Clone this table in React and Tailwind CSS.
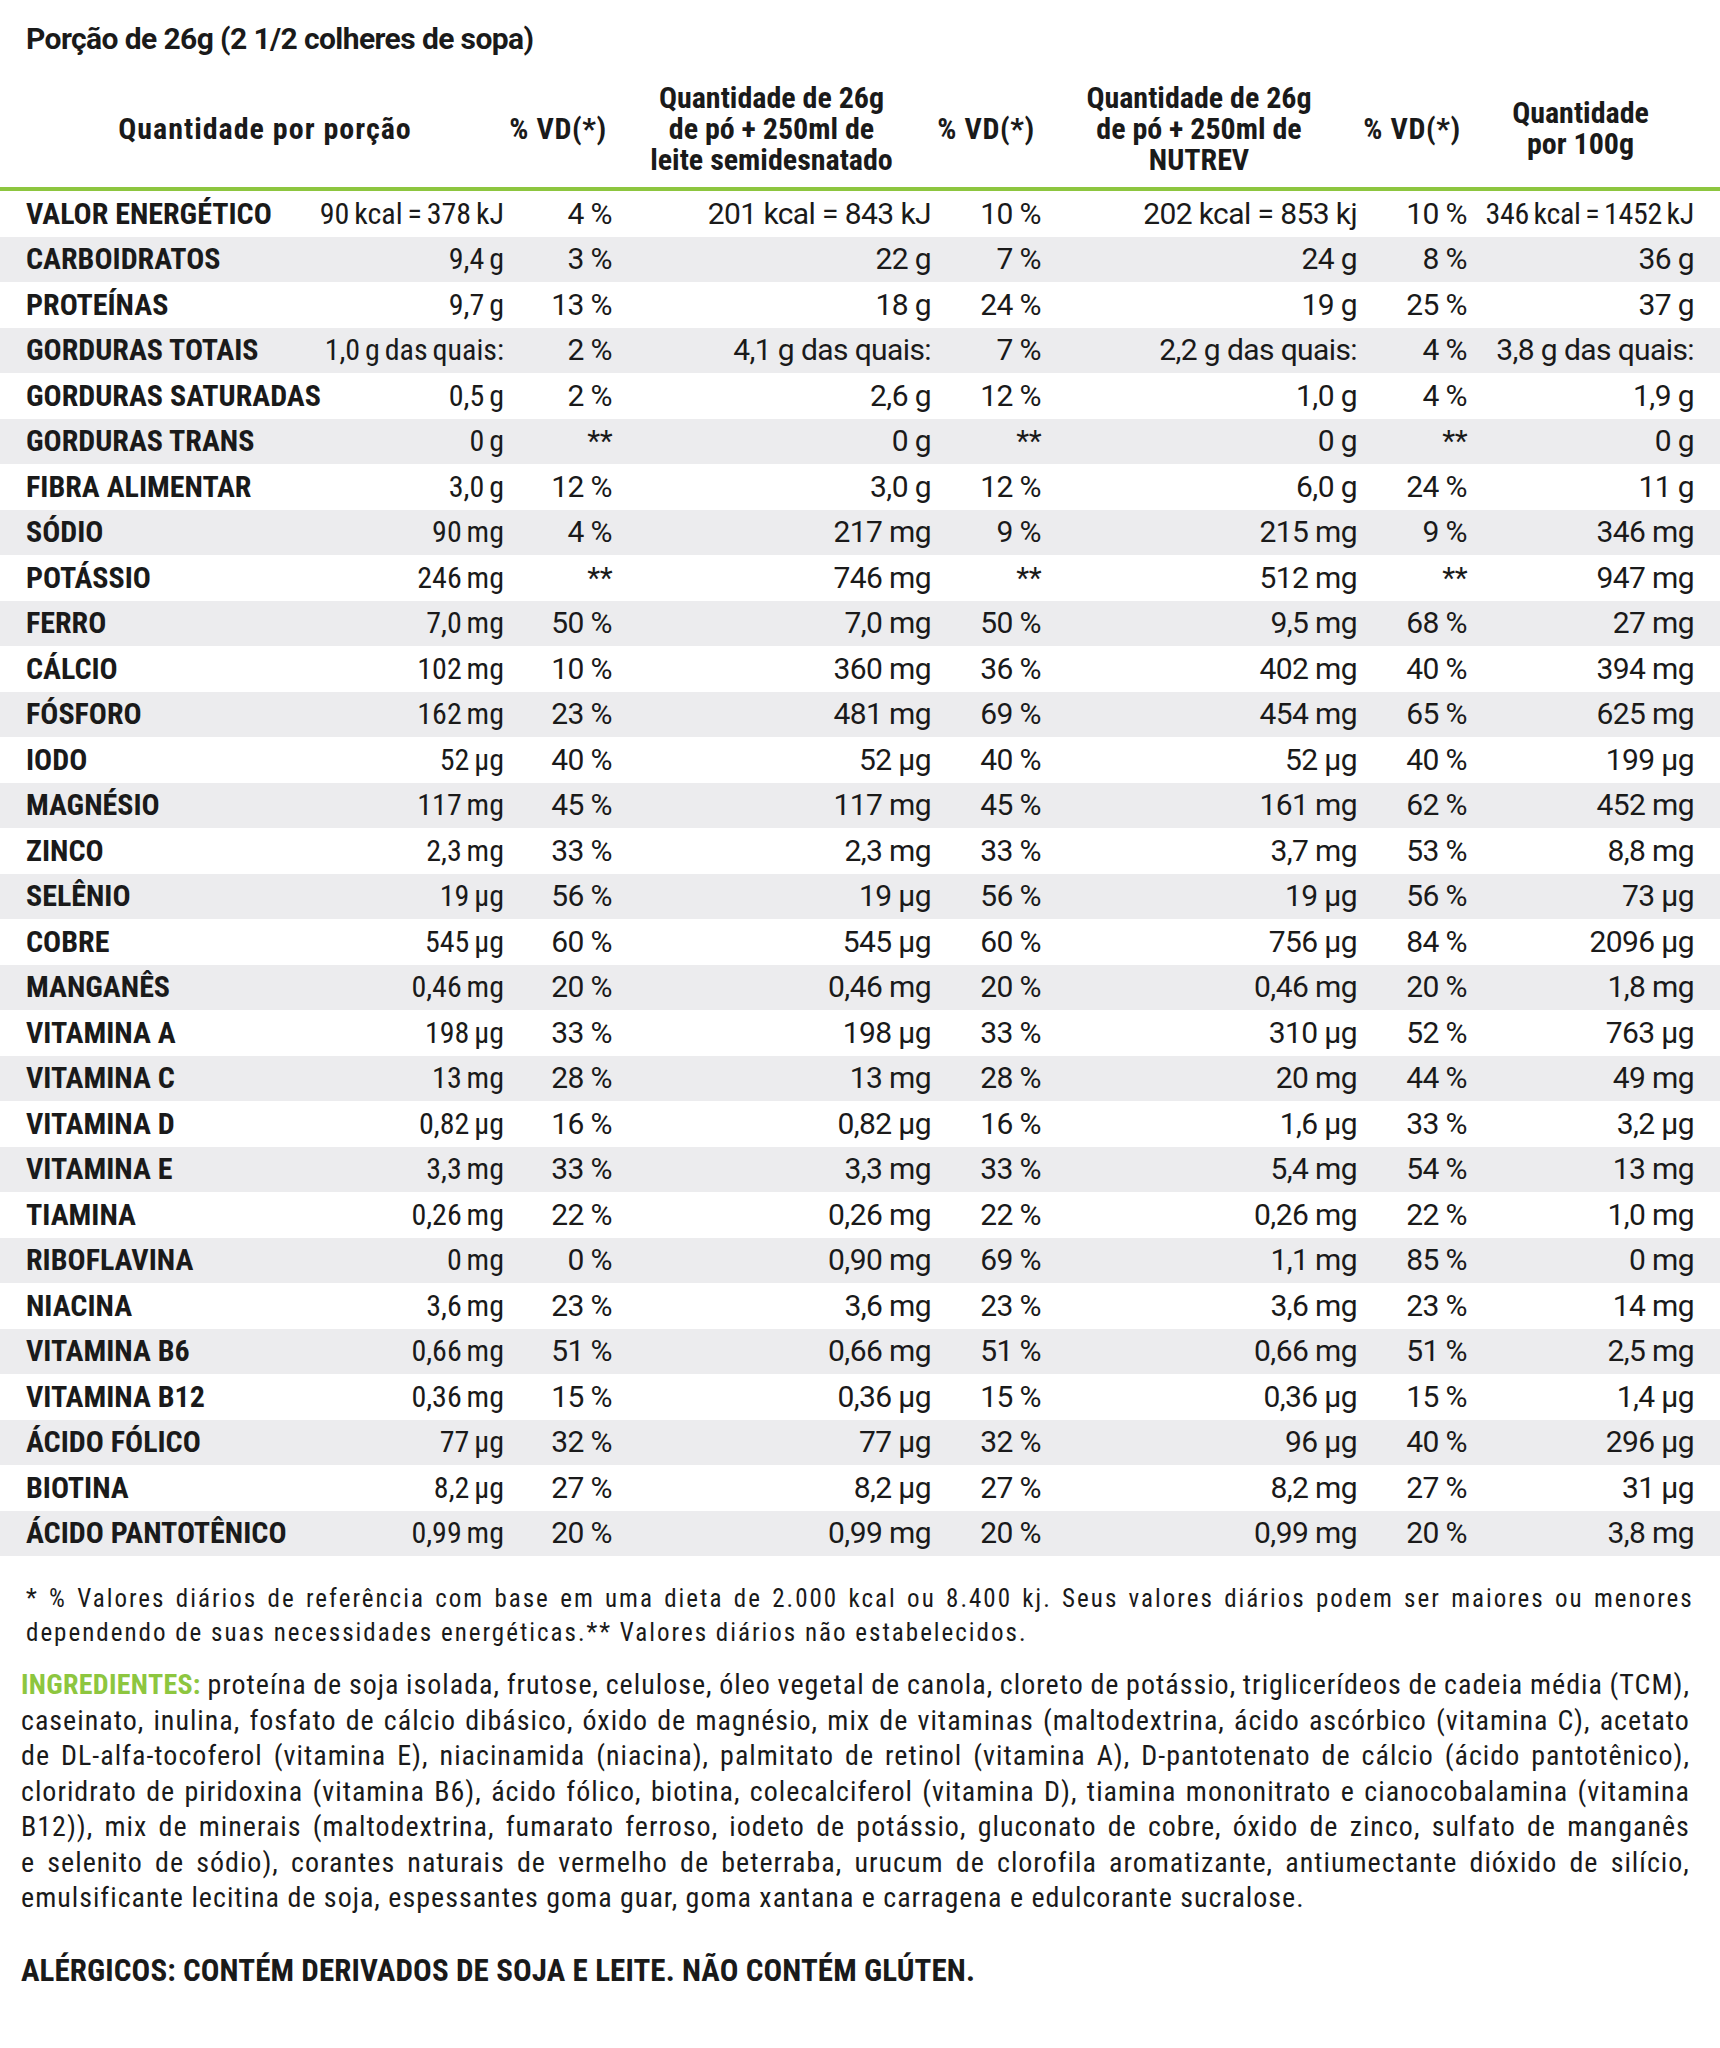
import React from "react";

const rows = [
  ["VALOR ENERGÉTICO", "90 kcal = 378 kJ", "4 %", "201 kcal = 843 kJ", "10 %", "202 kcal = 853 kj", "10 %", "346 kcal = 1452 kJ"],
  ["CARBOIDRATOS", "9,4 g", "3 %", "22 g", "7 %", "24 g", "8 %", "36 g"],
  ["PROTEÍNAS", "9,7 g", "13 %", "18 g", "24 %", "19 g", "25 %", "37 g"],
  ["GORDURAS TOTAIS", "1,0 g das quais:", "2 %", "4,1 g das quais:", "7 %", "2,2 g das quais:", "4 %", "3,8 g das quais:"],
  ["GORDURAS SATURADAS", "0,5 g", "2 %", "2,6 g", "12 %", "1,0 g", "4 %", "1,9 g"],
  ["GORDURAS TRANS", "0 g", "**", "0 g", "**", "0 g", "**", "0 g"],
  ["FIBRA ALIMENTAR", "3,0 g", "12 %", "3,0 g", "12 %", "6,0 g", "24 %", "11 g"],
  ["SÓDIO", "90 mg", "4 %", "217 mg", "9 %", "215 mg", "9 %", "346 mg"],
  ["POTÁSSIO", "246 mg", "**", "746 mg", "**", "512 mg", "**", "947 mg"],
  ["FERRO", "7,0 mg", "50 %", "7,0 mg", "50 %", "9,5 mg", "68 %", "27 mg"],
  ["CÁLCIO", "102 mg", "10 %", "360 mg", "36 %", "402 mg", "40 %", "394 mg"],
  ["FÓSFORO", "162 mg", "23 %", "481 mg", "69 %", "454 mg", "65 %", "625 mg"],
  ["IODO", "52 µg", "40 %", "52 µg", "40 %", "52 µg", "40 %", "199 µg"],
  ["MAGNÉSIO", "117 mg", "45 %", "117 mg", "45 %", "161 mg", "62 %", "452 mg"],
  ["ZINCO", "2,3 mg", "33 %", "2,3 mg", "33 %", "3,7 mg", "53 %", "8,8 mg"],
  ["SELÊNIO", "19 µg", "56 %", "19 µg", "56 %", "19 µg", "56 %", "73 µg"],
  ["COBRE", "545 µg", "60 %", "545 µg", "60 %", "756 µg", "84 %", "2096 µg"],
  ["MANGANÊS", "0,46 mg", "20 %", "0,46 mg", "20 %", "0,46 mg", "20 %", "1,8 mg"],
  ["VITAMINA A", "198 µg", "33 %", "198 µg", "33 %", "310 µg", "52 %", "763 µg"],
  ["VITAMINA C", "13 mg", "28 %", "13 mg", "28 %", "20 mg", "44 %", "49 mg"],
  ["VITAMINA D", "0,82 µg", "16 %", "0,82 µg", "16 %", "1,6 µg", "33 %", "3,2 µg"],
  ["VITAMINA E", "3,3 mg", "33 %", "3,3 mg", "33 %", "5,4 mg", "54 %", "13 mg"],
  ["TIAMINA", "0,26 mg", "22 %", "0,26 mg", "22 %", "0,26 mg", "22 %", "1,0 mg"],
  ["RIBOFLAVINA", "0 mg", "0 %", "0,90 mg", "69 %", "1,1 mg", "85 %", "0 mg"],
  ["NIACINA", "3,6 mg", "23 %", "3,6 mg", "23 %", "3,6 mg", "23 %", "14 mg"],
  ["VITAMINA B6", "0,66 mg", "51 %", "0,66 mg", "51 %", "0,66 mg", "51 %", "2,5 mg"],
  ["VITAMINA B12", "0,36 mg", "15 %", "0,36 µg", "15 %", "0,36 µg", "15 %", "1,4 µg"],
  ["ÁCIDO FÓLICO", "77 µg", "32 %", "77 µg", "32 %", "96 µg", "40 %", "296 µg"],
  ["BIOTINA", "8,2 µg", "27 %", "8,2 µg", "27 %", "8,2 mg", "27 %", "31 µg"],
  ["ÁCIDO PANTOTÊNICO", "0,99 mg", "20 %", "0,99 mg", "20 %", "0,99 mg", "20 %", "3,8 mg"],
];

const ingredientLines = [
  "proteína de soja isolada, frutose, celulose, óleo vegetal de canola, cloreto de potássio, triglicerídeos de cadeia média (TCM),",
  "caseinato, inulina, fosfato de cálcio dibásico, óxido de magnésio, mix de vitaminas (maltodextrina, ácido ascórbico (vitamina C), acetato",
  "de DL-alfa-tocoferol (vitamina E), niacinamida (niacina), palmitato de retinol (vitamina A), D-pantotenato de cálcio (ácido pantotênico),",
  "cloridrato de piridoxina (vitamina B6), ácido fólico, biotina, colecalciferol (vitamina D), tiamina mononitrato e cianocobalamina (vitamina",
  "B12)), mix de minerais (maltodextrina, fumarato ferroso, iodeto de potássio, gluconato de cobre, óxido de zinco, sulfato de manganês",
  "e selenito de sódio), corantes naturais de vermelho de beterraba, urucum de clorofila aromatizante, antiumectante dióxido de silício,",
];

const GRID = "grid grid-cols-[250px_228px_108px_319px_110px_316px_110px_227px]";

function valueClass(i, j) {
  if (j === 1) return "text-right [font-stretch:75%] [word-spacing:-2px]";
  if (j === 7 && i === 0) return "text-right [font-stretch:75%] tracking-[-0.3px] [word-spacing:-2px]";
  return "text-right [font-stretch:88%] tracking-[-0.6px]";
}

function JustifiedLine({ text, prefix }) {
  const words = text.split(" ");
  return (
    <div className="flex justify-between whitespace-nowrap">
      {prefix}
      {words.map((w, i) => (
        <span key={i}>{w}</span>
      ))}
    </div>
  );
}

export default function App() {
  return (
    <div className="w-[1720px] min-h-[2048px] bg-white text-[#1a1a1a] font-['Roboto',sans-serif]">
      {/* title */}
      <div className="pt-[19px] pl-[26px] h-[59px] text-[30px] leading-[40px] font-bold [font-stretch:88%] tracking-[-0.6px]">
        Porção de 26g (2 1/2 colheres de sopa)
      </div>

      {/* header */}
      <div className={`${GRID} pl-[26px] pt-[10px] h-[128px] items-center text-center font-bold text-[30px] leading-[31px] [font-stretch:75%] whitespace-nowrap`}>
        <div className="col-span-2 tracking-[1px]">Quantidade por porção</div>
        <div className="tracking-[0.6px]">% VD(*)</div>
        <div>Quantidade de 26g<br />de pó + 250ml de<br />leite semidesnatado</div>
        <div className="tracking-[0.6px]">% VD(*)</div>
        <div>Quantidade de 26g<br />de pó + 250ml de<br />NUTREV</div>
        <div className="tracking-[0.6px]">% VD(*)</div>
        <div>Quantidade<br />por 100g</div>
      </div>

      <div className="h-[4px] bg-[#8dc63f]" />

      {/* rows */}
      <div className="flex flex-col">
        {rows.map((r, i) => (
          <div
            key={r[0]}
            className={`${GRID} pl-[26px] h-[45.5px] items-center text-[30px] leading-[34px] whitespace-nowrap ${
              i % 2 === 1 ? "bg-[#ececee]" : "bg-white"
            }`}
          >
            <div className="font-bold [font-stretch:75%]">{r[0]}</div>
            {r.slice(1).map((c, k) => (
              <div key={k} className={valueClass(i, k + 1)}>
                {c}
              </div>
            ))}
          </div>
        ))}
      </div>

      {/* footnote */}
      <div className="mt-[26px] px-[26px] text-[25px] leading-[34px] tracking-[2px] [font-stretch:85%]">
        <JustifiedLine text="* % Valores diários de referência com base em uma dieta de 2.000 kcal ou 8.400 kj. Seus valores diários podem ser maiores ou menores" />
        <div>dependendo de suas necessidades energéticas.** Valores diários não estabelecidos.</div>
      </div>

      {/* ingredients */}
      <div className="mt-[17px] pl-[21px] pr-[30px] text-[28px] leading-[35.5px] [font-stretch:75%] tracking-[1px]">
        {ingredientLines.map((l, i) => (
          <JustifiedLine
            key={i}
            text={l}
            prefix={i === 0 ? <span className="font-bold text-[#8dc63f] tracking-[0.3px]">INGREDIENTES:</span> : null}
          />
        ))}
        <div>emulsificante lecitina de soja, espessantes goma guar, goma xantana e carragena e edulcorante sucralose.</div>
      </div>

      {/* allergens */}
      <div className="mt-[35px] pl-[21px] text-[31px] leading-[40px] font-bold [font-stretch:75%] tracking-[0.1px]">
        ALÉRGICOS: CONTÉM DERIVADOS DE SOJA E LEITE. NÃO CONTÉM GLÚTEN.
      </div>
    </div>
  );
}
